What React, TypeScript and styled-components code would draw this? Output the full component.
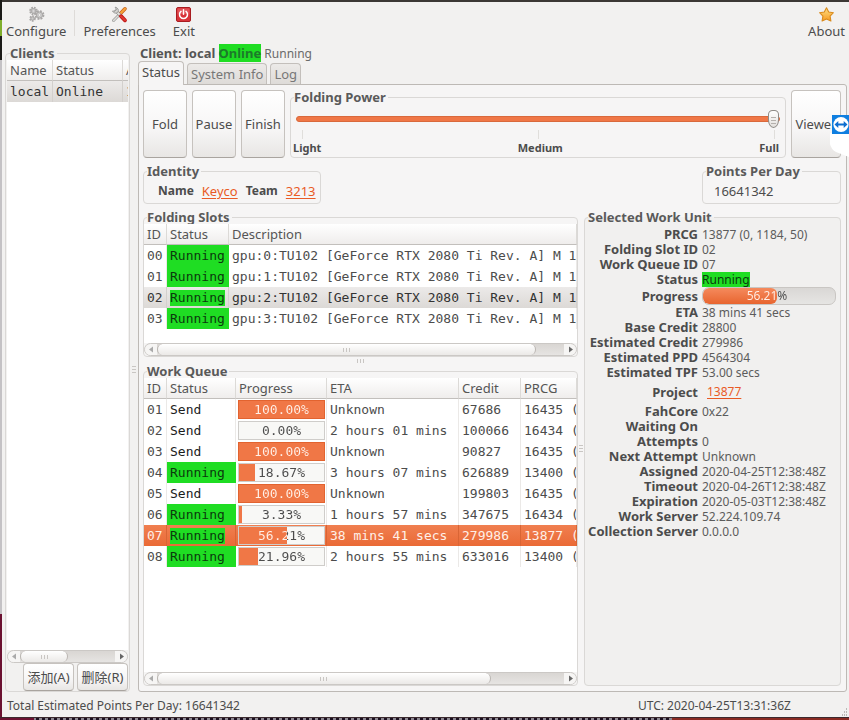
import React from "react";
import styled, { createGlobalStyle, css } from "styled-components";

const GREEN = "#1fdd23";
const ORANGE = "#f07746";
const UI = `"Noto Sans", "Noto Sans CJK SC", sans-serif`;
const MONO = `"DejaVu Sans Mono", monospace`;

const Global = createGlobalStyle`
  *, *::before, *::after { box-sizing: border-box; }
  html, body { margin: 0; padding: 0; }
  body { font: 12px/15px ${UI}; color: #4c4c4c; overflow: hidden; }
  button, input { font: inherit; color: inherit; }
`;

const Desktop = styled.div`
  height: 100vh;
  min-height: 600px;
  display: flex;
  flex-direction: column;
  padding: 0 0 0 2px;
  background: linear-gradient(#1b1b18 0 20px, #7fae2c 20px 36px, #1b1b18 36px 60px, #c4c2c5 60px 614px, #6b1131 614px);
`;

const Window = styled.main`
  flex: 1;
  min-height: 0;
  display: flex;
  flex-direction: column;
  background: #f2f1f0;
  border-top: 2px solid #3c3835;
`;

const DesktopEdge = styled.div`
  height: 3px;
  flex: none;
  margin-left: -2px;
  border-top: 1px solid #3b2a2e;
  background: linear-gradient(90deg, #6b1131 0 34px, transparent 34px 672px, #8a2a22 672px),
    repeating-linear-gradient(90deg, #1c1020 0 3px, #8d8790 3px 6px);
`;

const Toolbar = styled.nav`
  height: 44px;
  flex: none;
  display: flex;
  align-items: flex-start;
  padding: 4px 4px 0 4px;
`;

const ToolButton = styled.button`
  display: flex;
  flex-direction: column;
  align-items: center;
  padding: 0;
  border: 0;
  background: none;
  font-size: 13px;
  line-height: 17px;
  svg { display: block; }
`;

const ToolDivider = styled.span`
  width: 1px;
  height: 26px;
  margin: 4px 8px 0;
  background: #dedbd8;
`;

const Spacer = styled.span<{ $w?: number }>`
  ${(p) => (p.$w ? `width: ${p.$w}px;` : "flex: 1;")}
`;

const Main = styled.div`
  flex: 1;
  min-height: 0;
  display: flex;
  padding: 0 2px 0 3px;
`;

const Frame = styled.fieldset<{ $grow?: boolean; $shade?: boolean }>`
  min-width: 0;
  min-height: 0;
  margin: 0;
  padding: 0;
  border: 1px solid #dad8d6;
  border-radius: 4px;
  display: flex;
  flex-direction: column;
  ${(p) => p.$grow && css`flex: 1;`}
  ${(p) => p.$shade && css`background: #f1f0ef;`}
`;

const Legend = styled.legend`
  margin-left: 3px;
  padding: 0 2px 0 0;
  font-weight: 700;
  line-height: 14px;
  font-size: 13px;
  color: #5a5a5a;
`;

const ClientsFrame = styled(Frame)`
  width: 125px;
  flex: none;
  padding: 0 1px;
`;

const Handle = styled.div<{ $vertical?: boolean }>`
  flex: none;
  display: flex;
  align-items: center;
  justify-content: center;
  ${(p) => (p.$vertical ? "width: 6px;" : "height: 7px;")}
  &::after {
    content: "";
    ${(p) =>
      p.$vertical
        ? "width: 4px; height: 7px; background: repeating-linear-gradient(#c9c6c3 0 1px, transparent 1px 3px);"
        : "width: 7px; height: 4px; background: repeating-linear-gradient(90deg, #c9c6c3 0 1px, transparent 1px 3px);"}
  }
`;

const MainHandle = styled(Handle)`
  width: 8px;
`;

const View = styled.div`
  flex: 1;
  min-height: 0;
  overflow: hidden;
  background: #fff;
`;

const SlotsView = styled(View)`
  flex: none;
  height: 119px;
`;

const Table = styled.table`
  table-layout: fixed;
  width: 100%;
  border-collapse: separate;
  border-spacing: 0;
  font: 13px/20px ${MONO};
`;

const Col = styled.col<{ $w: number }>`
  width: ${(p) => p.$w}px;
`;

const Th = styled.th`
  height: 21px;
  padding: 0 0 0 3px;
  text-align: left;
  font: 13px/20px ${UI};
  color: #555;
  white-space: nowrap;
  overflow: hidden;
  background: linear-gradient(#fff, #efedec);
  border-bottom: 1px solid #c2bfbc;
  border-right: 1px solid #dcdad7;
`;

const Td = styled.td<{ $chip?: boolean; $dark?: boolean }>`
  height: 21px;
  padding: 0 0 0 3px;
  white-space: nowrap;
  overflow: hidden;
  border-right: 1px solid #ebe9e7;
  ${(p) => p.$dark && css`color: #1c1c1c;`}
  ${(p) => p.$chip && css`background: ${GREEN}; color: #0b3a0d; border-right-color: ${GREEN};`}
`;

const Tr = styled.tr<{ $sel?: "grey" | "orange" }>`
  ${(p) =>
    p.$sel === "grey" &&
    css`
      td {
        background: linear-gradient(#eceae9, #dcd9d6);
        border-right-color: #d3d0cd;
        color: #333;
      }
    `}
  ${(p) =>
    p.$sel === "orange" &&
    css`
      > td {
        background: linear-gradient(#f07f50, #ea6a36);
        border-right-color: #d96535;
        color: #fff0e8;
      }
    `}
`;

const Mark = styled.span`
  display: inline-block;
  line-height: 16px;
  background: ${GREEN};
  color: #0b3a0d;
`;

const CellBar = styled.div<{ $pct: number }>`
  height: 19px;
  margin: 0 1px 0 -1px;
  border: 1px solid ${(p) => (p.$pct === 100 ? "#e2632f" : "#cfcdca")};
  background: linear-gradient(90deg, ${ORANGE} ${(p) => p.$pct}%, #f8f8f6 ${(p) => p.$pct}%);
`;

const SplitText = styled.span<{ $pct: number }>`
  display: block;
  text-align: center;
  line-height: 17px;
  color: transparent;
  background: linear-gradient(90deg, #fff0e8 ${(p) => p.$pct}%, #4c4c4c ${(p) => p.$pct}%);
  -webkit-background-clip: text;
  background-clip: text;
`;

const Scroll = styled.div`
  flex: none;
  height: 13px;
  display: flex;
  border: 1px solid #cbc8c5;
  border-radius: 7px;
  background: linear-gradient(#d9d6d3, #e6e4e2);
  overflow: hidden;
`;

const ScrollArrow = styled.button`
  width: 12px;
  flex: none;
  padding: 0;
  border: 0;
  background: #f6f5f4;
  display: flex;
  align-items: center;
  justify-content: center;
`;

const Thumb = styled.div<{ $pct: number }>`
  width: ${(p) => p.$pct}%;
  border: solid #bab6b2;
  border-width: 0 1px;
  border-radius: 6px;
  background: linear-gradient(#fff, #ebe9e7);
  display: flex;
  align-items: center;
  justify-content: center;
  &::after {
    content: "";
    width: 7px;
    height: 4px;
    background: repeating-linear-gradient(90deg, #c9c6c3 0 1px, transparent 1px 3px);
  }
`;

const Track = styled.div`
  flex: 1;
  display: flex;
`;

const Push = styled.button<{ $w: number; $tall?: boolean }>`
  width: ${(p) => p.$w}px;
  height: ${(p) => (p.$tall ? 68 : 28)}px;
  flex: none;
  padding: 0;
  border: 1px solid #c6c2be;
  border-bottom-color: #a9a49f;
  border-radius: 4px;
  background: linear-gradient(#ffffff, #f6f5f5 60%, #e8e6e4);
  font-size: 13px;
  line-height: 17px;
  white-space: nowrap;
`;

const ClientButtons = styled.div`
  display: flex;
  justify-content: flex-end;
  gap: 3px;
`;

const Content = styled.section`
  flex: 1;
  min-width: 0;
  display: flex;
  flex-direction: column;
`;

const Heading = styled.h1`
  margin: 0;
  padding-left: 2px;
  font-size: 12px;
  line-height: 14px;
  font-weight: 400;
  color: #6a6a6a;
  b { font-size: 13px; color: #555; }
  mark { font-size: 13px; background: ${GREEN}; color: #1c7a2a; font-weight: 700; }
`;

const Tabs = styled.div`
  display: flex;
  align-items: flex-end;
  gap: 3px;
  height: 23px;
`;

const Tab = styled.button<{ $on?: boolean }>`
  height: ${(p) => (p.$on ? 24 : 21)}px;
  margin-bottom: ${(p) => (p.$on ? -1 : 0)}px;
  z-index: ${(p) => (p.$on ? 1 : 0)};
  padding: 0 3px ${(p) => (p.$on ? 2 : 0)}px;
  border: 1px solid #c3bfbb;
  border-bottom: 0;
  border-radius: 4px 4px 0 0;
  background: ${(p) => (p.$on ? "#f6f5f5" : "linear-gradient(#eceae8, #dedbd8)")};
  color: ${(p) => (p.$on ? "#4c4c4c" : "#777")};
  font-size: 13px;
  line-height: 17px;
`;

const Body = styled.div`
  flex: 1;
  min-height: 0;
  display: flex;
  flex-direction: column;
  gap: 6px;
  padding: 5px 5px 5px 4px;
  border: 1px solid #bdb9b5;
  border-radius: 0 3px 3px 3px;
  background: #f6f5f5;
`;

const Row = styled.div<{ $between?: boolean; $fill?: boolean }>`
  position: relative;
  display: flex;
  gap: ${(p) => (p.$fill ? 0 : 5)}px;
  ${(p) => p.$between && css`justify-content: space-between;`}
  ${(p) => p.$fill && css`flex: 1; min-height: 0;`}
`;

const Slider = styled.input`
  appearance: none;
  display: block;
  width: auto;
  height: 18px;
  margin: 6px 5px 0;
  background: transparent;
  &::-webkit-slider-runnable-track {
    height: 6px;
    border: 1px solid #d9693c;
    border-radius: 3px;
    background: ${ORANGE};
  }
  &::-webkit-slider-thumb {
    appearance: none;
    width: 11px;
    height: 18px;
    margin-top: -7px;
    border: 1px solid #8f8b87;
    border-radius: 5px 5px 6px 6px / 5px 5px 9px 9px;
    background: repeating-linear-gradient(#b5b1ad 0 1px, transparent 1px 3px) center 6px / 5px 7px no-repeat,
      linear-gradient(#fff, #e3e0dd);
  }
`;

const Ticks = styled.div`
  display: flex;
  justify-content: space-between;
  height: 9px;
  margin: 2px 10px 0 11px;
  span { width: 1px; background: #e0dedb; }
`;

const Scale = styled.div`
  display: flex;
  justify-content: space-between;
  padding: 0 6px 0 2px;
  font-size: 11px;
  font-weight: 700;
  line-height: 17px;
`;

const InfoLine = styled.div`
  display: flex;
  gap: 8px;
  height: 25px;
  padding: 0 4px 0 14px;
  font-size: 13px;
  line-height: 26px;
  b { font-size: 12px; }
`;

const PpdFrame = styled(Frame)`
  width: 139px;
  ${InfoLine} { padding-left: 11px; }
`;

const Link = styled.a`
  color: #e95b26;
  text-decoration: underline;
  text-underline-offset: 2px;
`;

const Lists = styled.div`
  flex: 1;
  min-width: 0;
  display: flex;
  flex-direction: column;
`;

const UnitFrame = styled(Frame)`
  width: 257px;
  flex: none;
`;

const Details = styled.dl`
  margin: 0;
  padding: 3px 4px 0 0;
  display: grid;
  grid-template-columns: 113px 1fr;
  column-gap: 4px;
  font-size: 12px;
`;

const Term = styled.dt<{ $h: number }>`
  font-size: 13px;
  font-weight: 700;
  text-align: right;
  white-space: nowrap;
  justify-self: end;
  height: ${(p) => p.$h}px;
  line-height: ${(p) => p.$h}px;
`;

const Value = styled.dd<{ $h: number; $indent?: boolean }>`
  margin: 0;
  padding-left: ${(p) => (p.$indent ? 5 : 0)}px;
  height: ${(p) => p.$h}px;
  line-height: ${(p) => p.$h}px;
  white-space: nowrap;
  color: #5c5c5c;
`;

const StatusMark = styled.span`
  display: inline-block;
  height: 15px;
  background: ${GREEN};
  color: #0b3a0d;
`;

const PillBar = styled.div<{ $pct: number }>`
  height: 18px;
  border: 1px solid #c9c6c3;
  border-radius: 7px;
  overflow: hidden;
  position: relative;
  background: linear-gradient(#d9d7d5, #e6e5e3);
  &::before {
    content: "";
    position: absolute;
    inset: 0 auto 0 0;
    width: ${(p) => p.$pct}%;
    border-radius: 6px;
    background: linear-gradient(#f58a5d, #e8652f);
  }
`;

const PillText = styled(SplitText)`
  position: relative;
  padding-right: 4px;
  line-height: 16px;
`;

const StatusBar = styled.footer`
  flex: none;
  height: 25px;
  display: flex;
  align-items: center;
  padding: 2px 0 0 5px;
  font-size: 12px;
`;

const StatusLeft = styled.span`
  flex: 1;
`;

const StatusRight = styled.span`
  width: 201px;
`;

const Grip = styled.svg`
  align-self: flex-end;
`;

const Floating = styled.svg`
  position: absolute;
  right: -8px;
  top: 24px;
`;

const Arrow = ({ right }: { right?: boolean }) => (
  <svg width="5" height="7" viewBox="0 0 5 7" aria-hidden="true">
    <path d={right ? "M1 .5 5 3.5 1 6.5Z" : "M4 .5 0 3.5 4 6.5Z"} fill={right ? "#666" : "#aaa"} />
  </svg>
);

const HScroll = ({ pct }: { pct: number }) => (
  <Scroll>
    <ScrollArrow aria-label="Scroll left"><Arrow /></ScrollArrow>
    <Track><Thumb $pct={pct} /></Track>
    <ScrollArrow aria-label="Scroll right"><Arrow right /></ScrollArrow>
  </Scroll>
);

const GearsIcon = () => (
  <svg width="17" height="17" viewBox="0 0 17 17" aria-hidden="true">
    <g fill="#d4d3d2" stroke="#a9a7a6">
      <circle cx="5.5" cy="5" r="3" strokeWidth="2.6" strokeDasharray="1.5 .86" />
      <circle cx="5.5" cy="5" r="2.4" />
      <circle cx="11.5" cy="9" r="3.6" strokeWidth="2.6" strokeDasharray="1.7 1.13" />
      <circle cx="11.5" cy="9" r="3" />
      <circle cx="4.5" cy="12.5" r="2.2" strokeWidth="2.2" strokeDasharray="1.3 1" />
      <circle cx="4.5" cy="12.5" r="1.7" />
    </g>
    <g fill="#f2f1f0" stroke="#a3a1a0" strokeWidth=".5">
      <circle cx="5.5" cy="5" r="1" />
      <circle cx="11.5" cy="9" r="1.4" />
      <circle cx="4.5" cy="12.5" r=".7" />
    </g>
  </svg>
);

const ToolsIcon = () => (
  <svg width="17" height="17" viewBox="0 0 17 17" aria-hidden="true" strokeLinecap="round">
    <path d="M8.500 8.500 2.500 14.600" stroke="#8d8d8b" strokeWidth="2.800" />
    <path d="M8.500 8.500 2.500 14.600" stroke="#dededb" strokeWidth="1.500" />
    <path d="M9 8 14 2.800" stroke="#c4601c" strokeWidth="3.600" />
    <path d="M9 8 14 2.800" stroke="#f6a13a" strokeWidth="2.200" />
    <path d="M5 5 10 10.200" stroke="#8d8d8b" strokeWidth="3.200" />
    <path d="M5 5 10 10.200" stroke="#e2e2df" strokeWidth="1.900" />
    <path d="M4.500 1.200C7 1.600 8 4 7 6 5.500 7.800 2.600 7.500 1.500 5L4 5.200 5.200 3.800Z" fill="#d5d5d2" stroke="#8d8d8b" strokeWidth=".8" />
    <path d="M10 10.200 14 14.300" stroke="#c01818" strokeWidth="3.800" />
    <path d="M10 10.200 14 14.300" stroke="#e03b32" strokeWidth="2" />
  </svg>
);

const PowerIcon = () => (
  <svg width="17" height="17" viewBox="0 0 17 17" aria-hidden="true">
    <rect x="1.5" y="1.5" width="14" height="14" rx="1.5" fill="#d8343a" stroke="#a81c20" />
    <rect x="2.5" y="2.5" width="12" height="5.5" fill="#e8686a" opacity=".6" />
    <path d="M6 5.4a4 4 0 1 0 5 0M8.5 3.8V8.2" fill="none" stroke="#fff" strokeWidth="1.5" strokeLinecap="round" />
  </svg>
);

const StarIcon = () => (
  <svg width="17" height="17" viewBox="0 0 17 17" aria-hidden="true">
    <defs>
      <linearGradient id="star" x2="0" y2="1">
        <stop stopColor="#fde087" />
        <stop offset="1" stopColor="#f79a1e" />
      </linearGradient>
    </defs>
    <path
      d="M8.5 1.7 10.7 6 15.4 6.7 12.1 10.1 12.9 15 8.5 12.9 4.1 15 4.9 10.1 1.6 6.7 6.3 6Z"
      fill="url(#star)" stroke="#d98a1c" strokeWidth="1.1" strokeLinejoin="round"
    />
  </svg>
);

const slots = ["00", "01", "02", "03"].map((id, i) => ({
  id,
  text: `gpu:${i}:TU102 [GeForce RTX 2080 Ti Rev. A] M 1`,
}));

const queue = [
  { id: "01", status: "Send", pct: 100, eta: "Unknown", credit: "67686", prcg: "16435 (" },
  { id: "02", status: "Send", pct: 0, eta: "2 hours 01 mins", credit: "100066", prcg: "16434 (" },
  { id: "03", status: "Send", pct: 100, eta: "Unknown", credit: "90827", prcg: "16435 (" },
  { id: "04", status: "Running", pct: 18.67, eta: "3 hours 07 mins", credit: "626889", prcg: "13400 (" },
  { id: "05", status: "Send", pct: 100, eta: "Unknown", credit: "199803", prcg: "16435 (" },
  { id: "06", status: "Running", pct: 3.33, eta: "1 hours 57 mins", credit: "347675", prcg: "16434 (" },
  { id: "07", status: "Running", pct: 56.21, eta: "38 mins 41 secs", credit: "279986", prcg: "13877 (" },
  { id: "08", status: "Running", pct: 21.96, eta: "2 hours 55 mins", credit: "633016", prcg: "13400 (" },
];

const details: [string, string][] = [
  ["PRCG", "13877 (0, 1184, 50)"],
  ["Folding Slot ID", "02"],
  ["Work Queue ID", "07"],
  ["Status", "Running"],
  ["Progress", "56.21"],
  ["ETA", "38 mins 41 secs"],
  ["Base Credit", "28800"],
  ["Estimated Credit", "279986"],
  ["Estimated PPD", "4564304"],
  ["Estimated TPF", "53.00 secs"],
  ["Project", "13877"],
  ["FahCore", "0x22"],
  ["Waiting On", ""],
  ["Attempts", "0"],
  ["Next Attempt", "Unknown"],
  ["Assigned", "2020-04-25T12:38:48Z"],
  ["Timeout", "2020-04-26T12:38:48Z"],
  ["Expiration", "2020-05-03T12:38:48Z"],
  ["Work Server", "52.224.109.74"],
  ["Collection Server", "0.0.0.0"],
];

const rowHeight = (name: string) => (name === "Progress" ? 18 : name === "Project" ? 24 : 15);

const DetailValue = ({ name, value }: { name: string; value: string }) => {
  if (name === "Status") return <StatusMark>{value}</StatusMark>;
  if (name === "Project") return <Link href="#project">{value}</Link>;
  if (name === "Progress") {
    const pct = Number(value);
    return (
      <PillBar $pct={pct} role="progressbar" aria-valuenow={pct} aria-label="Progress">
        <PillText $pct={pct}>{value}%</PillText>
      </PillBar>
    );
  }
  return <>{value}</>;
};

const ClientList = () => (
  <ClientsFrame>
    <Legend>Clients</Legend>
    <View>
      <Table>
        <colgroup><Col $w={46} /><Col $w={70} /><Col $w={7} /></colgroup>
        <thead><tr><Th>Name</Th><Th>Status</Th><Th>A</Th></tr></thead>
        <tbody><Tr $sel="grey"><Td>local</Td><Td>Online</Td><Td>1</Td></Tr></tbody>
      </Table>
    </View>
    <HScroll pct={51} />
    <ClientButtons>
      <Push $w={51}>添加(A)</Push>
      <Push $w={51}>删除(R)</Push>
    </ClientButtons>
  </ClientsFrame>
);

const SlotList = () => (
  <Frame>
    <Legend>Folding Slots</Legend>
    <SlotsView>
      <Table>
        <colgroup><Col $w={23} /><Col $w={62} /><col /></colgroup>
        <thead><tr><Th>ID</Th><Th>Status</Th><Th>Description</Th></tr></thead>
        <tbody>
          {slots.map((s) => {
            const sel = s.id === "02";
            return (
              <Tr key={s.id} $sel={sel ? "grey" : undefined}>
                <Td>{s.id}</Td>
                <Td $chip={!sel}>{sel ? <Mark>Running</Mark> : "Running"}</Td>
                <Td>{s.text}</Td>
              </Tr>
            );
          })}
        </tbody>
      </Table>
    </SlotsView>
    <HScroll pct={93} />
  </Frame>
);

const QueueList = () => (
  <Frame $grow>
    <Legend>Work Queue</Legend>
    <View>
      <Table>
        <colgroup>
          <Col $w={23} /><Col $w={69} /><Col $w={91} /><Col $w={132} /><Col $w={62} /><col />
        </colgroup>
        <thead>
          <tr><Th>ID</Th><Th>Status</Th><Th>Progress</Th><Th>ETA</Th><Th>Credit</Th><Th>PRCG</Th></tr>
        </thead>
        <tbody>
          {queue.map((q) => {
            const sel = q.id === "07";
            const running = q.status === "Running";
            return (
              <Tr key={q.id} $sel={sel ? "orange" : undefined}>
                <Td>{q.id}</Td>
                <Td $dark $chip={running && !sel}>{sel ? <Mark>{q.status}</Mark> : q.status}</Td>
                <Td>
                  <CellBar $pct={q.pct}>
                    <SplitText $pct={q.pct}>{q.pct.toFixed(2)}%</SplitText>
                  </CellBar>
                </Td>
                <Td>{q.eta}</Td>
                <Td>{q.credit}</Td>
                <Td>{q.prcg}</Td>
              </Tr>
            );
          })}
        </tbody>
      </Table>
    </View>
    <HScroll pct={82} />
  </Frame>
);

export default function App() {
  return (
    <>
      <Global />
      <Desktop>
        <Window>
          <Toolbar>
            <ToolButton><GearsIcon />Configure</ToolButton>
            <ToolDivider />
            <ToolButton><ToolsIcon />Preferences</ToolButton>
            <Spacer $w={17} />
            <ToolButton><PowerIcon />Exit</ToolButton>
            <Spacer />
            <ToolButton><StarIcon />About</ToolButton>
          </Toolbar>
          <Main>
            <ClientList />
            <MainHandle $vertical />
            <Content>
              <Heading><b>Client: local</b> <mark>Online</mark> Running</Heading>
              <Tabs role="tablist">
                <Tab role="tab" aria-selected $on>Status</Tab>
                <Tab role="tab">System Info</Tab>
                <Tab role="tab">Log</Tab>
              </Tabs>
              <Body>
                <Row>
                  <Push $w={44} $tall>Fold</Push>
                  <Push $w={44} $tall>Pause</Push>
                  <Push $w={44} $tall>Finish</Push>
                  <Frame $grow>
                    <Legend>Folding Power</Legend>
                    <Slider type="range" min={0} max={100} defaultValue={100} aria-label="Folding Power" />
                    <Ticks><span /><span /><span /></Ticks>
                    <Scale><span>Light</span><span>Medium</span><span>Full</span></Scale>
                  </Frame>
                  <Push $w={50} $tall>Viewer</Push>
                  <Floating width="19" height="44" viewBox="0 0 19 44" role="img" aria-label="Remote session">
                    <path d="M0 19H19V43L6 38Q1 35 0 30Z" fill="#fff" />
                    <path d="M2 1H19V20H2Z" fill="#0f7fe0" />
                    <circle cx="11" cy="10.500" r="7.600" fill="#fff" />
                    <path d="M4.500 10.500 8.300 7V9.500H13.700V7L17.500 10.500 13.700 14V11.500H8.300V14Z" fill="#0f6fd0" />
                  </Floating>
                </Row>
                <Row $between>
                  <Frame>
                    <Legend>Identity</Legend>
                    <InfoLine>
                      <b>Name</b><Link href="#donor">Keyco</Link><b>Team</b><Link href="#team">3213</Link>
                    </InfoLine>
                  </Frame>
                  <PpdFrame>
                    <Legend>Points Per Day</Legend>
                    <InfoLine>16641342</InfoLine>
                  </PpdFrame>
                </Row>
                <Row $fill>
                  <Lists>
                    <SlotList />
                    <Handle />
                    <QueueList />
                  </Lists>
                  <Handle $vertical />
                  <UnitFrame $shade>
                    <Legend>Selected Work Unit</Legend>
                    <Details>
                      {details.map(([name, value]) => (
                        <React.Fragment key={name}>
                          <Term $h={rowHeight(name)}>{name}</Term>
                          <Value $h={rowHeight(name)} $indent={name === "Project"}>
                            <DetailValue name={name} value={value} />
                          </Value>
                        </React.Fragment>
                      ))}
                    </Details>
                  </UnitFrame>
                </Row>
              </Body>
            </Content>
          </Main>
          <StatusBar>
            <StatusLeft>Total Estimated Points Per Day: 16641342</StatusLeft>
            <StatusRight>UTC: 2020-04-25T13:31:36Z</StatusRight>
            <Grip width="10" height="10" viewBox="0 0 10 10" aria-hidden="true">
              <path d="M7 2h1M5 5h1M7 5h1M3 8h1M5 8h1M7 8h1" stroke="#aaa6a2" strokeWidth="1.500" />
            </Grip>
          </StatusBar>
        </Window>
        <DesktopEdge />
      </Desktop>
    </>
  );
}
